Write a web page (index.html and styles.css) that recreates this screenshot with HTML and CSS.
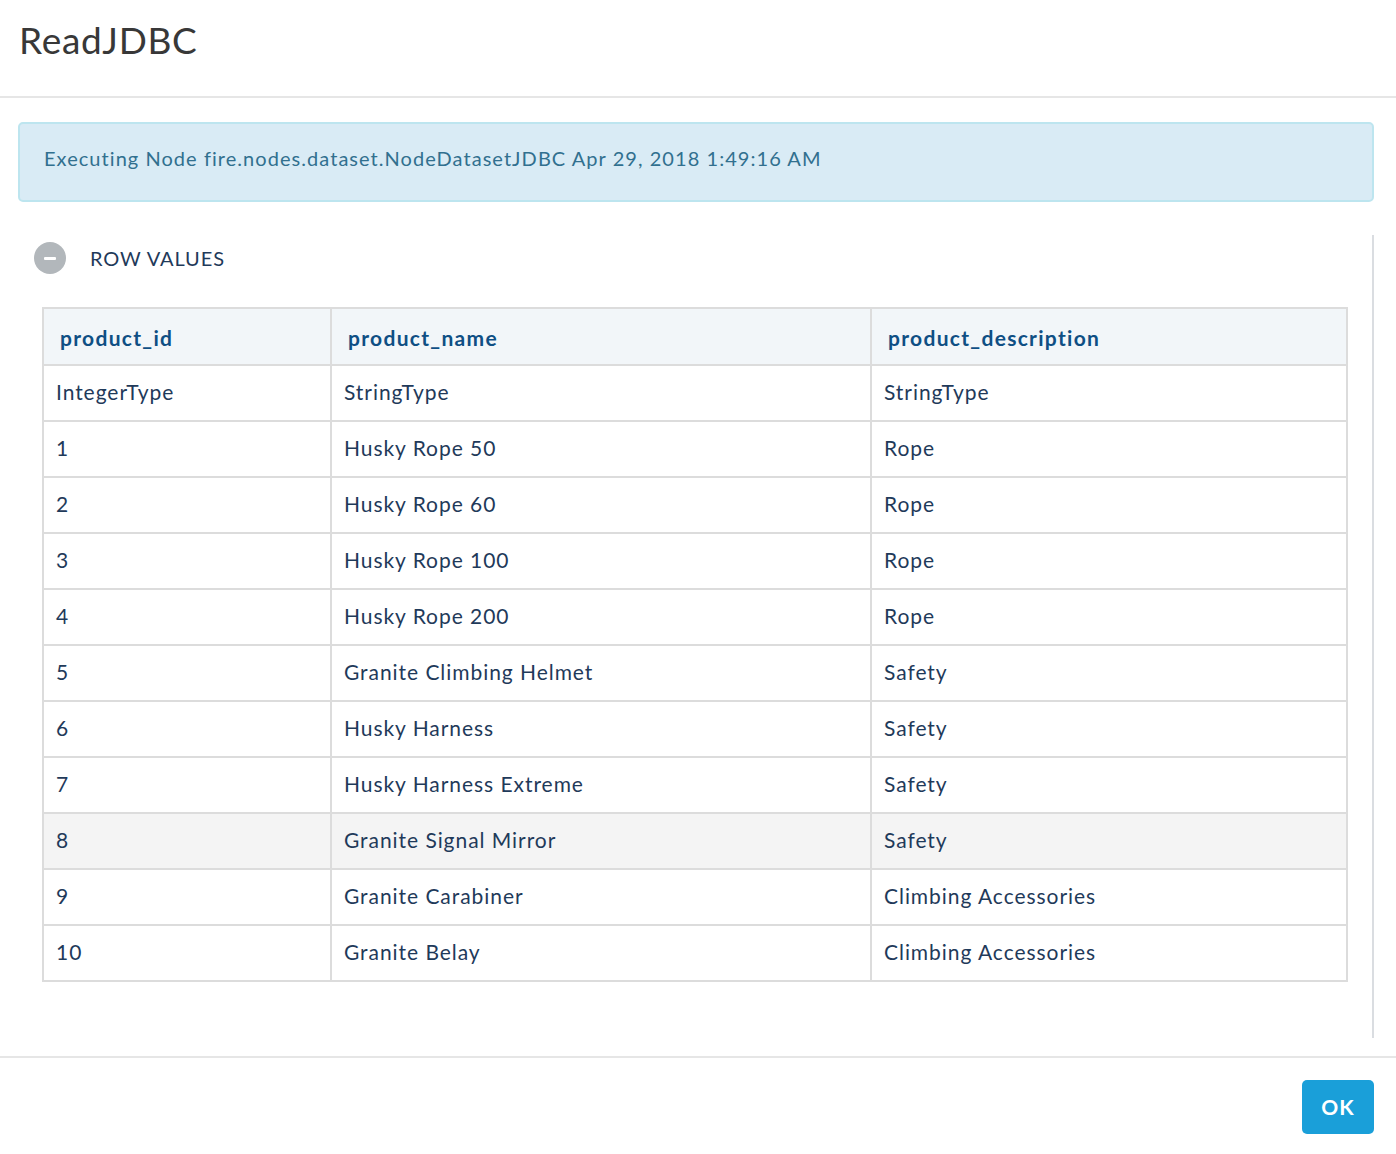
FILE: index.html
```html
<!DOCTYPE html>
<html>
<head>
<meta charset="utf-8">
<link rel="stylesheet" href="styles.css">
</head>
<body>
<div class="modal">
  <div class="modal-header">
    <h1 class="title">ReadJDBC</h1>
  </div>
  <div class="modal-body">
    <div class="alert">Executing Node fire.nodes.dataset.NodeDatasetJDBC Apr 29, 2018 1:49:16 AM</div>
    <div class="scroll-area">
      <div class="section-head">
        <span class="toggle"><span class="dash"></span></span>
        <span class="section-title">ROW VALUES</span>
      </div>
      <table class="grid">
        <colgroup><col class="c1"><col class="c2"><col class="c3"></colgroup>
        <thead>
          <tr><th>product_id</th><th>product_name</th><th>product_description</th></tr>
        </thead>
        <tbody>
          <tr><td>IntegerType</td><td>StringType</td><td>StringType</td></tr>
          <tr><td>1</td><td>Husky Rope 50</td><td>Rope</td></tr>
          <tr><td>2</td><td>Husky Rope 60</td><td>Rope</td></tr>
          <tr><td>3</td><td>Husky Rope 100</td><td>Rope</td></tr>
          <tr><td>4</td><td>Husky Rope 200</td><td>Rope</td></tr>
          <tr><td>5</td><td>Granite Climbing Helmet</td><td>Safety</td></tr>
          <tr><td>6</td><td>Husky Harness</td><td>Safety</td></tr>
          <tr><td>7</td><td>Husky Harness Extreme</td><td>Safety</td></tr>
          <tr class="hover"><td>8</td><td>Granite Signal Mirror</td><td>Safety</td></tr>
          <tr><td>9</td><td>Granite Carabiner</td><td>Climbing Accessories</td></tr>
          <tr><td>10</td><td>Granite Belay</td><td>Climbing Accessories</td></tr>
        </tbody>
      </table>
    </div>
  </div>
  <div class="modal-footer">
    <button class="btn-ok">OK</button>
  </div>
</div>
</body>
</html>
```
FILE: styles.css
```css
* { box-sizing: border-box; }
html, body { margin: 0; padding: 0; background: #fff; }
body { font-family: Lato, "Noto Sans", sans-serif; color: #1f3a5a; }

.modal { width: 1396px; }

.modal-header {
  height: 98px;
  padding: 17px 19px 0;
  border-bottom: 2px solid #e6e6e6;
}
.title {
  margin: 0;
  font-size: 37px;
  font-weight: 400;
  color: #383838;
  line-height: 46px;
  letter-spacing: 0.7px;
}

.modal-body {
  padding: 24px 22px 18px 18px;
}
.alert {
  height: 80px;
  padding: 0 24px 8px;
  display: flex;
  align-items: center;
  background: #d9ebf5;
  border: 2px solid #bde5ef;
  border-radius: 5px;
  color: #31708f;
  font-size: 20px;
  letter-spacing: 1.05px;
}

.scroll-area {
  margin-top: 33px;
  height: 803px;
  border-right: 2px solid #dadde1;
  padding: 6px 24px 0 16px;
}
.section-head {
  display: flex;
  align-items: center;
  height: 34px;
}
.toggle {
  width: 32px;
  height: 32px;
  border-radius: 50%;
  background: #b2b7bb;
  display: flex;
  align-items: center;
  justify-content: center;
}
.dash {
  width: 12px;
  height: 3px;
  background: #fff;
  border-radius: 1px;
}
.section-title {
  margin-left: 24px;
  font-size: 20px;
  color: #1f3a5a;
  letter-spacing: 0.9px;
}

.grid {
  margin: 32px 0 0 8px;
  width: 1306px;
  border-collapse: collapse;
  border: 2px solid #dcdcdc;
}
.c1 { width: 288px; }
.c2 { width: 540px; }
.grid th, .grid td {
  border: 2px solid #dcdcdc;
  text-align: left;
  font-size: 21px;
  height: 56px;
  padding: 0 12px 4px;
}
.grid th {
  background: #f2f6f9;
  color: #0f4f84;
  font-weight: 700;
  padding: 1px 12px 0 16px;
  height: 57px;
  letter-spacing: 1.3px;
}
.grid td { color: #1f3a5a; letter-spacing: 0.95px; }
.grid tr.hover td { background: #f4f4f4; }

.modal-footer {
  border-top: 2px solid #e6e6e6;
  padding: 22px 22px 0 0;
  display: flex;
  justify-content: flex-end;
}
.btn-ok {
  width: 72px;
  height: 54px;
  border: none;
  border-radius: 5px;
  background: #1a9fd9;
  color: #fff;
  font-family: Lato, "Noto Sans", sans-serif;
  font-weight: 700;
  font-size: 21px;
  letter-spacing: 1px;
  padding: 0 0 2px;
}
```
